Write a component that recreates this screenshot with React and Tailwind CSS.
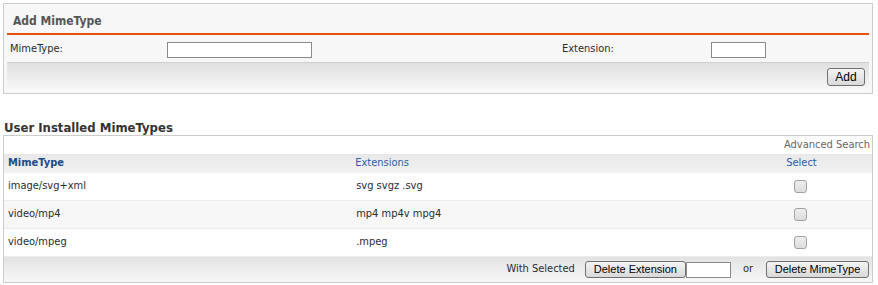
import React from 'react';

const rows = [
  { mime: 'image/svg+xml', ext: 'svg svgz .svg' },
  { mime: 'video/mp4', ext: 'mp4 mp4v mpg4' },
  { mime: 'video/mpeg', ext: '.mpeg' },
];

const Btn = ({ children, className = '' }) => (
  <button
    className={
      'h-[17px] rounded-[3px] border border-[#707070] bg-gradient-to-b from-[#f4f4f4] to-[#d9d9d9] font-["Liberation_Sans",Arial,sans-serif] text-[11px] leading-none text-black ' +
      className
    }
  >
    {children}
  </button>
);

const Check = () => (
  <span className="block h-[13px] w-[13px] rounded-[3px] border border-[#a2a2a2] bg-gradient-to-b from-[#eeeeee] to-[#dcdcdc]" />
);

export default function App() {
  return (
    <div className="h-[285px] w-[878px] bg-white pt-[3px] font-['DejaVu_Sans_Condensed','Liberation_Sans',sans-serif] text-[11px] text-[#2b2b2b]">
      {/* add form panel */}
      <div className="ml-[3px] w-[870px] border border-[#cccccc] bg-[#f7f7f7] p-[3px]">
        <div className="flex h-[26px] items-center pl-[6px] pt-[2px] text-[12px] font-bold text-[#555]">
          Add MimeType
        </div>
        <div className="h-[2px] bg-[#e2500c]" />
        <div className="flex h-[27px] items-center pt-[2px]">
          <div className="w-[160px] pl-[3px]">MimeType:</div>
          <input className="h-[16px] w-[145px] border border-[#8a8a8a] bg-white" />
          <div className="ml-[250px] w-[149px]">Extension:</div>
          <input className="h-[16px] w-[55px] border border-[#8a8a8a] bg-white" />
        </div>
        <div className="flex h-[28px] items-center justify-end border-t border-[#cfcfcf] bg-gradient-to-b from-[#e0e0e0] to-[#f7f7f7] pr-[4px] pt-[1px]">
          <Btn className="h-[18px] w-[38px] text-[12px]">Add</Btn>
        </div>
      </div>

      <div className="mt-[26px] flex h-[15px] items-center pl-[4px] text-[13px] font-bold text-[#333]">
        User Installed MimeTypes
      </div>

      {/* table */}
      <div className="ml-[3px] w-[870px] border border-[#cccccc]">
        <div className="flex h-[18px] items-center justify-end pr-[2px] text-[#666]">Advanced Search</div>
        <div className="grid h-[19px] grid-cols-[40%_50%_10%] items-center bg-gradient-to-b from-[#e8e8e8] to-[#f2f2f2] text-[#2a5ca8]">
          <div className="pl-[4px] font-bold text-[#1d4a8c]">MimeType</div>
          <div className="pl-[4px]">Extensions</div>
          <div className="pl-[1px]">Select</div>
        </div>
        {rows.map((r, i) => (
          <div
            key={r.mime}
            className={
              'grid h-[28px] grid-cols-[40%_50%_10%] items-center border-b border-[#ececec] ' +
              (i % 2 === 1 ? 'bg-[#f7f7f7]' : 'bg-white')
            }
          >
            <div className="pl-[4px]">{r.mime}</div>
            <div className="pl-[5px]">{r.ext}</div>
            <div className="pl-[9px]">
              <Check />
            </div>
          </div>
        ))}
        <div className="flex h-[25px] items-center justify-end bg-gradient-to-b from-[#e3e3e3] to-[#f7f7f7] pr-[3px]">
          <span className="mr-[10px]">With Selected</span>
          <Btn className="w-[101px]">Delete Extension</Btn>
          <input className="h-[16px] w-[45px] border border-[#8a8a8a] bg-white" />
          <span className="ml-[12px] mr-[13px]">or</span>
          <Btn className="w-[103px]">Delete MimeType</Btn>
        </div>
      </div>
    </div>
  );
}
